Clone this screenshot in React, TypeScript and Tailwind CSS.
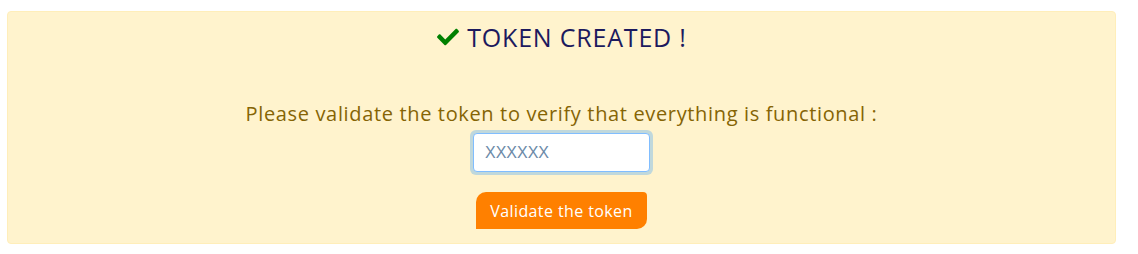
import React from "react";
import { FaCheck } from "react-icons/fa";

export default function App() {
  return (
    <div className="w-[1138px] h-[254px] bg-white pt-[11px] pl-[7px]" style={{ fontFamily: '"Open Sans", "Noto Sans", sans-serif' }}>
      <div className="w-[1109px] h-[233px] bg-[#fff3cd] border border-[#ffeeba] rounded-[4px] flex flex-col items-center">
        <div className="flex items-center gap-[7px] mt-[10px] h-[30px]">
          <FaCheck className="text-[#008000] w-[24px] h-[22px]" />
          <span className="text-[25px] text-[#1c1a5e] tracking-[0.8px] leading-none">TOKEN CREATED !</span>
        </div>
        <p className="mt-[49px] text-[20px] text-[#856404] leading-[26px] tracking-[0.65px]">
          Please validate the token to verify that everything is functional :
        </p>
        <div className="mt-[3px] w-[183px] h-[45px] rounded-[6px] bg-[#c0d8dc] p-[3px]">
          <input
            autoFocus
            placeholder="XXXXXX"
            className="w-full h-full bg-white border border-[#80bdff] rounded-[4px] px-[11px] text-[16px] text-[#495057] placeholder:text-[#6c8aa8] outline-none"
            style={{ fontFamily: '"Liberation Sans", sans-serif' }}
          />
        </div>
        <button className="mt-[17px] w-[171px] h-[37px] bg-[#ff8000] text-white text-[16px] tracking-[0.4px] rounded-tl-[10px] rounded-tr-[4px] rounded-br-[10px] rounded-bl-none">
          Validate the token
        </button>
      </div>
    </div>
  );
}
